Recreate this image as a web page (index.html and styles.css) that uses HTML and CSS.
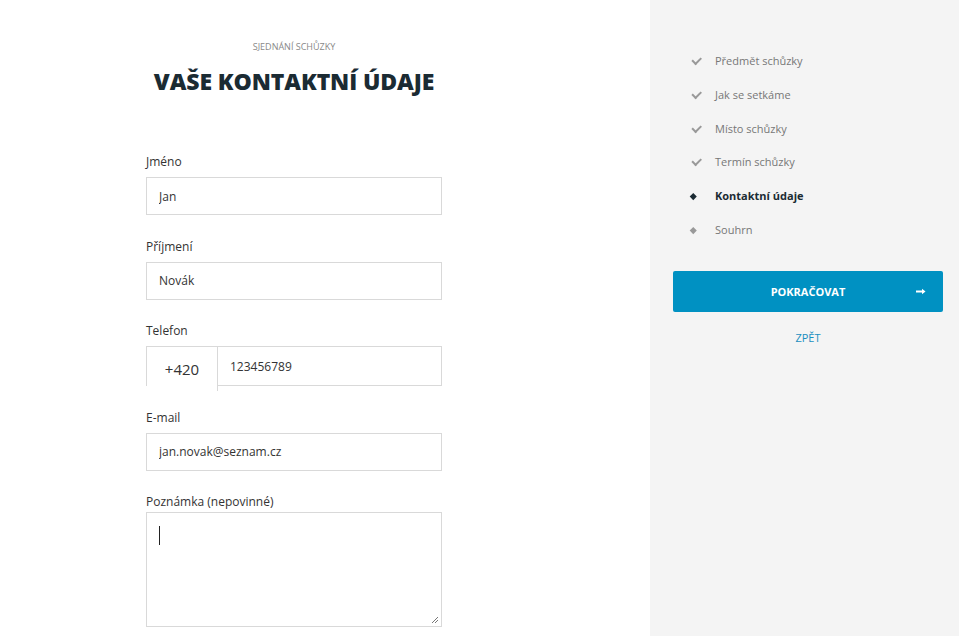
FILE: index.html
```html
<!DOCTYPE html>
<html lang="cs">

<head>
    <meta charset="utf-8">
    <meta name="viewport" content="width=device-width, initial-scale=1.0">

    <title>Sjednání schůzky</title>

    <link rel="stylesheet" href="styles.css">

</head>

<body>
    <main class="page">
        <section class="formular">
            <p class="nadpis-maly">Sjednání schůzky</p>
            <h1>Vaše kontaktní údaje</h1>

            <form>
                <label class="pole">
                    <span>Jméno</span>
                    <input type="text" value="Jan">
                </label>

                <label class="pole">
                    <span>Příjmení</span>
                    <input type="text" value="Novák">
                </label>

                <div class="pole">
                    <span>Telefon</span>
                    <div class="telefon">
                        <div class="predvolba">+420</div>
                        <input type="text" value="123456789">
                    </div>
                </div>

                <label class="pole">
                    <span>E-mail</span>
                    <input type="text" value="jan.novak@seznam.cz">
                </label>

                <label class="pole poznamka">
                    <span>Poznámka (nepovinné)</span>
                    <div class="textarea">
                        <i class="kurzor"></i>
                        <svg class="grip" width="8" height="8" viewBox="0 0 8 8">
                            <path d="M7 1 L1 7 M7 4 L4 7" stroke="#777" stroke-width="1"/>
                        </svg>
                    </div>
                </label>
            </form>
        </section>

        <aside class="kroky">
            <ul>
                <li class="hotovo">Předmět schůzky</li>
                <li class="hotovo">Jak se setkáme</li>
                <li class="hotovo">Místo schůzky</li>
                <li class="hotovo">Termín schůzky</li>
                <li class="aktivni">Kontaktní údaje</li>
                <li class="dalsi">Souhrn</li>
            </ul>

            <button class="pokracovat">Pokračovat
                <svg class="sipka" width="10" height="7" viewBox="0 0 10 7">
                    <path d="M0 3.5 H8" stroke="#fff" stroke-width="2"/>
                    <path d="M6 0.8 L9.5 3.5 L6 6.2 Z" fill="#fff"/>
                </svg>
            </button>
            <a class="zpet" href="#">Zpět</a>
        </aside>
    </main>
</body>

</html>
```

FILE: styles.css
```css
* {
    box-sizing: border-box;
}

body {
    margin: 0;
    font-family: "Open Sans", sans-serif;
    color: #333;
    background: #fff;
}

.page {
    display: flex;
    height: 636px;
    overflow: hidden;
}

.formular {
    width: 650px;
    padding-left: 146px;
}

.formular form {
    width: 296px;
}

.nadpis-maly {
    width: 296px;
    margin: 40px 0 0;
    text-align: center;
    font-size: 9px;
    text-transform: uppercase;
    color: #888;
}

h1 {
    width: 296px;
    margin: 12px 0 0;
    text-align: center;
    font-size: 23px;
    font-weight: 800;
    text-transform: uppercase;
    color: #1b2b33;
    letter-spacing: -0.1px;
}

form {
    margin-top: 56px;
}

.pole {
    display: block;
    margin-bottom: 22.5px;
}

.pole > span {
    display: block;
    font-size: 12px;
    margin-bottom: 7px;
}

.pole input {
    display: block;
    width: 100%;
    height: 38px;
    border: 1px solid #d9d9d9;
    padding: 0 12px;
    font-family: "Open Sans", sans-serif;
    font-size: 12px;
    color: #333;
    outline: none;
}

.telefon {
    display: flex;
    height: 40px;
    border: 1px solid #d9d9d9;
}

.predvolba {
    width: 71px;
    flex: none;
    border-right: 1px solid #d9d9d9;
    margin-bottom: -6px;
    padding-top: 12px;
    text-align: center;
    font-size: 15px;
    background: #fff;
}

.telefon input {
    border: none;
    height: 36px;
    margin-top: 1px;
}

.poznamka > span {
    margin-bottom: 2px;
}

.textarea {
    position: relative;
    height: 115px;
    border: 1px solid #d9d9d9;
}

.kurzor {
    position: absolute;
    left: 12px;
    top: 13px;
    width: 1px;
    height: 19px;
    background: #222;
}

.grip {
    position: absolute;
    right: 2px;
    bottom: 2px;
}

.kroky {
    flex: 1;
    background: #f4f4f4;
    padding: 44px 16px 0 23px;
}

.kroky ul {
    list-style: none;
    margin: 0;
    padding: 0;
}

.kroky li {
    position: relative;
    height: 33.8px;
    padding-left: 42px;
    font-size: 11px;
    line-height: 34px;
    color: #777;
}

.kroky li.hotovo::before {
    content: "";
    position: absolute;
    left: 19px;
    top: 13px;
    width: 7px;
    height: 3.5px;
    border-left: 2px solid #999;
    border-bottom: 2px solid #999;
    transform: rotate(-45deg);
}

.kroky li.aktivni {
    font-weight: 700;
    color: #1b2b33;
}

.kroky li.aktivni::before,
.kroky li.dalsi::before {
    content: "";
    position: absolute;
    left: 18px;
    top: 15px;
    width: 4.5px;
    height: 4.5px;
    background: #1b2b33;
    transform: rotate(45deg);
}

.kroky li.dalsi::before {
    background: #999;
}

.pokracovat {
    display: block;
    position: relative;
    width: 270px;
    height: 41px;
    margin-top: 24px;
    border: none;
    border-radius: 2px;
    background: #0091c2;
    color: #fff;
    font-family: "Open Sans", sans-serif;
    font-size: 11px;
    font-weight: 700;
    text-transform: uppercase;
    cursor: pointer;
}

.sipka {
    position: absolute;
    right: 17px;
    top: 17px;
}

.zpet {
    display: block;
    width: 270px;
    margin-top: 18px;
    text-align: center;
    font-size: 11px;
    text-transform: uppercase;
    color: #1a8fc0;
    text-decoration: none;
}
```
